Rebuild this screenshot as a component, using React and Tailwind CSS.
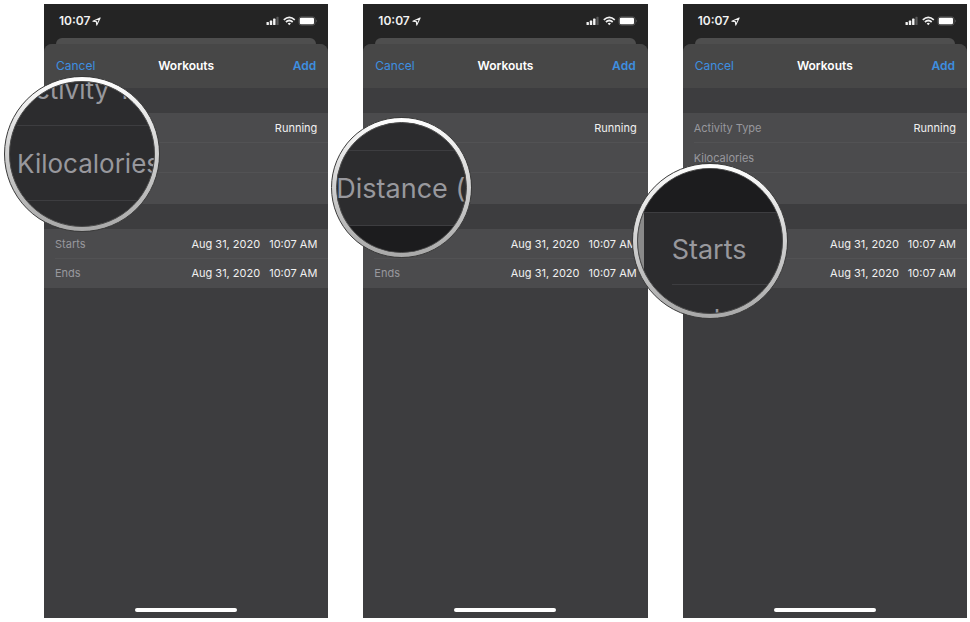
import React from "react";

function LocationIcon() {
  return (
    <svg className="h-[9px] w-[9px]" viewBox="0 0 10 10" fill="none" stroke="#f2f2f2" strokeWidth="1.2" strokeLinejoin="round" aria-hidden="true">
      <path d="M9 1 L1 4.7 L4.9 5.1 L5.3 9 Z" />
    </svg>
  );
}

function StatusIcons() {
  return (
    <svg className="h-[10px] w-[52px]" viewBox="0 0 52 10" fill="none" aria-hidden="true">
      <g fill="#f2f2f2">
        <rect x="0.5" y="6" width="2.4" height="3" rx="0.6" />
        <rect x="3.8" y="4.6" width="2.4" height="4.4" rx="0.6" />
        <rect x="7.1" y="2.6" width="2.4" height="6.4" rx="0.6" />
        <rect x="10.4" y="0.8" width="2.2" height="8.2" rx="0.6" fill="#5a5a5a" />
      </g>
      <g stroke="#f2f2f2" strokeWidth="1.7">
        <path d="M17.8 3.8 Q23.3 -0.9 28.8 3.8" />
        <path d="M19.9 6 Q23.3 3 26.7 6" />
      </g>
      <path d="M21.7 7.4 Q23.3 6.2 24.9 7.4 L23.3 9.2 Z" fill="#f2f2f2" />
      <rect x="33" y="0.9" width="16" height="8.2" rx="2.2" stroke="#6a6a6a" strokeWidth="0.7" />
      <rect x="33.8" y="1.7" width="14.2" height="6.6" rx="1.4" fill="#ffffff" />
      <path d="M50 3.6 Q51.6 5 50 6.4 Z" fill="#6a6a6a" />
    </svg>
  );
}

function Field({ id, label, height, last, children }) {
  return (
    <div className={`flex pl-[11px] ${height}`}>
      <div className={`flex min-w-0 flex-1 items-center justify-between gap-2 border-b pr-[11px] ${last ? "border-transparent" : "border-[#525254]"}`}>
        <label htmlFor={id} className="shrink-0 whitespace-nowrap text-[#98989d]">{label}</label>
        {children}
      </div>
    </div>
  );
}

function Moment({ id }) {
  return (
    <button id={id} type="button" className="flex gap-[9px] whitespace-nowrap text-[#f0f0f0]">
      <span>Aug 31, 2020</span>
      <span>10:07 AM</span>
    </button>
  );
}

function Phone({ name, typeLabel = "Activity Type", children }) {
  return (
    <section className="relative flex min-w-0 flex-1 flex-col bg-[#242424] text-[11px] leading-4">
      <div className="flex h-[34px] items-center justify-between pl-[15px] pr-[10px]">
        <div className="flex items-center gap-[2px] text-[12px] font-semibold text-[#f2f2f2]">
          <span>10:07</span>
          <LocationIcon />
        </div>
        <StatusIcons />
      </div>
      <div className="mx-3 h-[6px] rounded-t-[8px] bg-[#4e4e4e]" />
      <div className="flex flex-1 flex-col overflow-hidden rounded-t-[8px] bg-[#3d3d3f]">
        <header className="grid h-11 grid-cols-3 items-center bg-[#474747] px-3 text-[12px]">
          <button type="button" className="justify-self-start text-[#3e8fe0]">Cancel</button>
          <h2 className="justify-self-center font-semibold text-white">Workouts</h2>
          <button type="button" className="justify-self-end font-semibold text-[#3e8fe0]">Add</button>
        </header>
        <form className="flex flex-col gap-[25px] pt-[25px]">
          <div className="bg-[#4b4b4d]">
            <Field id={`${name}-type`} label={typeLabel} height="h-[30px]">
              <button id={`${name}-type`} type="button" className="text-[#f0f0f0]">Running</button>
            </Field>
            <Field id={`${name}-kcal`} label="Kilocalories" height="h-[30px]">
              <input id={`${name}-kcal`} type="text" className="min-w-0 flex-1 bg-transparent text-right text-[#f0f0f0] outline-none" />
            </Field>
            <Field id={`${name}-distance`} label="Distance (mi)" height="h-[31px]" last>
              <input id={`${name}-distance`} type="text" className="min-w-0 flex-1 bg-transparent text-right text-[#f0f0f0] outline-none" />
            </Field>
          </div>
          <div className="bg-[#4b4b4d]">
            <Field id={`${name}-starts`} label="Starts" height="h-[30px]">
              <Moment id={`${name}-starts`} />
            </Field>
            <Field id={`${name}-ends`} label="Ends" height="h-[29px]" last>
              <Moment id={`${name}-ends`} />
            </Field>
          </div>
        </form>
        <div className="mx-auto mb-[6px] mt-auto h-1 w-[102px] rounded-full bg-white" />
      </div>
      {children}
    </section>
  );
}

function Lens({ place, children }) {
  return (
    <div className={`absolute z-10 rounded-full border border-[#3a3a3a] bg-linear-to-b from-white via-[#d0d0d0] to-[#a8a8a8] p-1 ${place}`} aria-hidden="true">
      <div className="flex h-full w-full flex-col overflow-hidden rounded-full border border-[#4a4a4a] bg-[#2c2c2e] leading-8 text-[#98989d]">
        {children}
      </div>
    </div>
  );
}

export default function App() {
  return (
    <main className="flex min-h-screen gap-[35px] overflow-hidden bg-white pb-1 pl-11 pr-[3px] pt-1 font-[Inter,'Liberation_Sans',sans-serif]">
      <Phone name="first">
        <Lens place="-left-10 top-[72px] size-[156px] text-[26px]">
          <div className="-mt-8 ml-[7px] flex h-[76px] shrink-0 items-center whitespace-nowrap border-b border-[#3d3d40] pt-1">Activity Type</div>
          <div className="ml-[7px] flex h-[75px] shrink-0 items-center whitespace-nowrap border-b border-[#3d3d40] pt-[2px]">Kilocalories</div>
        </Lens>
      </Phone>
      <Phone name="second" typeLabel="Activity">
        <Lens place="-left-8 top-[113px] size-[141px] text-[27px]">
          <div className="-mt-12 flex h-[76px] shrink-0 items-center whitespace-nowrap border-b border-[#3d3d40] pt-[2px]">Kilocalories</div>
          <div className="-ml-px flex h-[75px] shrink-0 items-center whitespace-nowrap border-b border-[#3d3d40] pt-[2px]">Distance (mi)</div>
          <div className="flex-1 bg-[#1c1c1e]" />
        </Lens>
      </Phone>
      <Phone name="third">
        <Lens place="-left-[51px] top-[159px] size-[156px] text-[27px]">
          <div className="flex h-full border-l-[6px] border-[#8a8a8a]">
            <div className="flex min-w-0 flex-1 flex-col">
              <div className="h-11 shrink-0 border-b border-[#3d3d40] bg-[#1c1c1e]" />
              <div className="ml-7 flex h-[72px] shrink-0 items-center border-b border-[#3d3d40] pt-[2px]">Starts</div>
              <div className="ml-7 flex h-[70px] shrink-0 items-center">Ends</div>
            </div>
          </div>
        </Lens>
      </Phone>
    </main>
  );
}
